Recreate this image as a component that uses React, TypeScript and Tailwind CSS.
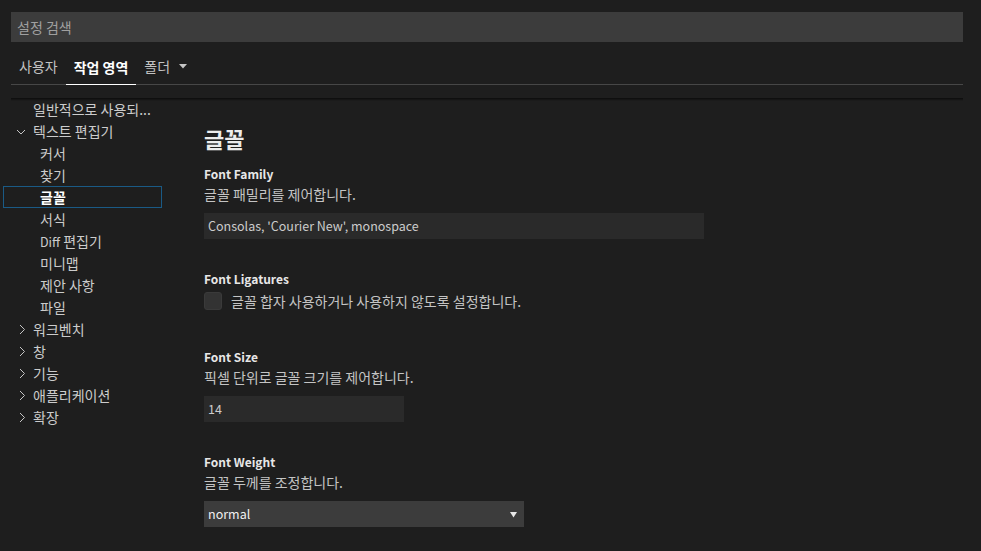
import React from "react";

const FONT = '"Noto Sans CJK KR", "Noto Sans", sans-serif';

type TreeItem = {
  label: React.ReactNode;
  key: string;
  level: 1 | 2;
  chevron?: "down" | "right";
  selected?: boolean;
};

const treeItems: TreeItem[] = [
  { key: "common", label: "일반적으로 사용되...", level: 1 },
  { key: "editor", label: "텍스트 편집기", level: 1, chevron: "down" },
  { key: "cursor", label: "커서", level: 2 },
  { key: "find", label: "찾기", level: 2 },
  { key: "font", label: "글꼴", level: 2, selected: true },
  { key: "format", label: "서식", level: 2 },
  {
    key: "diff",
    label: (
      <>
        <span className="text-[12.5px]">Diff</span> 편집기
      </>
    ),
    level: 2,
  },
  { key: "minimap", label: "미니맵", level: 2 },
  { key: "suggest", label: "제안 사항", level: 2 },
  { key: "files", label: "파일", level: 2 },
  { key: "workbench", label: "워크벤치", level: 1, chevron: "right" },
  { key: "window", label: "창", level: 1, chevron: "right" },
  { key: "features", label: "기능", level: 1, chevron: "right" },
  { key: "app", label: "애플리케이션", level: 1, chevron: "right" },
  { key: "ext", label: "확장", level: 1, chevron: "right" },
];

function Chevron({ dir }: { dir: "down" | "right" }) {
  return (
    <svg width="11" height="11" viewBox="0 0 11 11" className="absolute left-[12px] top-[5px]">
      {dir === "down" ? (
        <path d="M1 4 L5 8 L9 4" fill="none" stroke="#c5c5c5" strokeWidth="1" />
      ) : (
        <path d="M4 1 L8.5 5.5 L4 10" fill="none" stroke="#c5c5c5" strokeWidth="1" />
      )}
    </svg>
  );
}

function Setting({ label, desc, children, pb }: { label: string; desc?: string; children: React.ReactNode; pb: string }) {
  return (
    <div className={pb}>
      <div className="h-5 leading-5 text-[12px] font-bold text-[#e7e7e7]">{label}</div>
      {desc && <div className="h-5 leading-5 text-[14px] text-[#c4c4c4]">{desc}</div>}
      {children}
    </div>
  );
}

export default function App() {
  return (
    <div className="w-[981px] h-[551px] bg-[#1e1e1e] overflow-hidden" style={{ fontFamily: FONT }}>
      <div className="w-[952px] ml-[11px]">
        {/* search */}
        <div className="mt-[12px] h-[30px] bg-[#3c3c3c] flex items-center px-[6px] text-[14px] text-[#a0a0a0]">
          설정 검색
        </div>

        {/* tabs */}
        <div className="h-[43px] border-b border-[#474747] flex items-end text-[14px]">
          <div className="px-[8px] h-[32px] pb-[3px] flex items-center text-[#c2c2c2]">사용자</div>
          <div className="px-[8px] h-[32px] pb-[3px] flex items-center font-bold text-white border-b border-white -mb-px">
            작업 영역
          </div>
          <div className="px-[8px] h-[32px] pb-[3px] flex items-center text-[#c2c2c2] gap-[9px]">
            폴더
            <svg width="8" height="5" viewBox="0 0 8 5">
              <path d="M0 0 H8 L4 4.5 Z" fill="#c5c5c5" />
            </svg>
          </div>
        </div>

        {/* body */}
        <div className="relative mt-[13px] flex">
          <div className="absolute left-0 right-0 top-0 h-[3px] bg-gradient-to-b from-[#0c0c0c] to-transparent" />

          {/* tree */}
          <div className="w-[159px] -ml-[8px] shrink-0">
            {treeItems.map((item) => (
              <div
                key={item.key}
                className={`relative h-[22px] leading-[20px] text-[14px] ${
                  item.selected ? "border border-[#1a5a85] font-bold text-white" : "border border-transparent text-[#cccccc]"
                } ${item.level === 1 ? "pl-[29px]" : "pl-[36px]"}`}
              >
                {item.chevron && <Chevron dir={item.chevron} />}
                {item.label}
              </div>
            ))}
          </div>

          {/* content */}
          <div className="ml-[42px] pt-[26px]">
            <div className="h-[28px] leading-[28px] text-[22px] font-bold text-[#ececec] mb-[12px]">글꼴</div>

            <Setting label="Font Family" desc="글꼴 패밀리를 제어합니다." pb="pb-[30px]">
              <div className="mt-[9px] w-[500px] h-[26px] bg-[#2a2a2a] flex items-center px-[4px] text-[12.5px] text-[#cccccc]">
                Consolas, 'Courier New', monospace
              </div>
            </Setting>

            <Setting label="Font Ligatures" pb="pb-[37px]">
              <div className="mt-[3px] h-[18px] flex items-center gap-[9px]">
                <div className="w-[18px] h-[18px] rounded-[3px] bg-[#333333] border border-[#3a3a3a]" />
                <span className="text-[14px] text-[#c4c4c4]">글꼴 합자 사용하거나 사용하지 않도록 설정합니다.</span>
              </div>
            </Setting>

            <Setting label="Font Size" desc="픽셀 단위로 글꼴 크기를 제어합니다." pb="pb-[30px]">
              <div className="mt-[9px] w-[200px] h-[26px] bg-[#2a2a2a] flex items-center px-[4px] text-[12.5px] text-[#cccccc]">
                14
              </div>
            </Setting>

            <Setting label="Font Weight" desc="글꼴 두께를 조정합니다." pb="pb-0">
              <div className="mt-[9px] w-[320px] h-[26px] bg-[#3c3c3c] flex items-center justify-between px-[4px] text-[12.5px] text-[#f0f0f0]">
                normal
                <svg width="7" height="7" viewBox="0 0 7 7" className="mr-[3px]">
                  <path d="M0 1 H7 L3.5 6.5 Z" fill="#e8e8e8" />
                </svg>
              </div>
            </Setting>
          </div>
        </div>
      </div>
    </div>
  );
}
